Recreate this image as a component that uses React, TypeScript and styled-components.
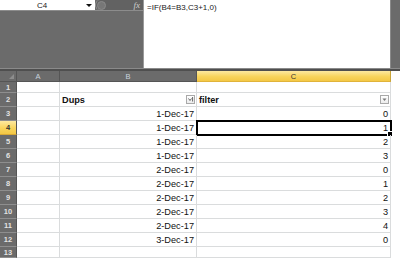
import React from "react";
import styled, { createGlobalStyle } from "styled-components";

const GlobalStyle = createGlobalStyle`
  html, body {
    margin: 0;
    padding: 0;
    background: #ffffff;
  }
  body {
    font-family: "Liberation Sans", Arial, sans-serif;
  }
`;

type Row = {
  n: number;
  b: string;
  c: string;
  h: number;
  head?: boolean;
};

const rows: Row[] = [
  { n: 1, b: "", c: "", h: 11 },
  { n: 2, b: "Dups", c: "filter", h: 14, head: true },
  { n: 3, b: "1-Dec-17", c: "0", h: 14 },
  { n: 4, b: "1-Dec-17", c: "1", h: 14 },
  { n: 5, b: "1-Dec-17", c: "2", h: 14 },
  { n: 6, b: "1-Dec-17", c: "3", h: 14 },
  { n: 7, b: "2-Dec-17", c: "0", h: 14 },
  { n: 8, b: "2-Dec-17", c: "1", h: 14 },
  { n: 9, b: "2-Dec-17", c: "2", h: 14 },
  { n: 10, b: "2-Dec-17", c: "3", h: 14 },
  { n: 11, b: "2-Dec-17", c: "4", h: 14 },
  { n: 12, b: "3-Dec-17", c: "0", h: 14 },
  { n: 13, b: "", c: "", h: 11 },
];

const activeRow = 4;

export default function App() {
  return (
    <Page>
      <GlobalStyle />
      <TopArea>
        <LeftPane>
          <NameRow>
            <NameBox>
              <NameText>C4</NameText>
              <DropArrow />
            </NameBox>
            <FxPill>
              <Knob />
              <Fx>fx</Fx>
            </FxPill>
          </NameRow>
        </LeftPane>
        <FormulaBar>=IF(B4=B3,C3+1,0)</FormulaBar>
        <RightEdge />
      </TopArea>
      <Band />
      <Sheet>
        <Corner>
          <CornerTri />
        </Corner>
        <ColHead>A</ColHead>
        <ColHead>B</ColHead>
        <ColHead $active>C</ColHead>
        <ColRest />
        {rows.map((r) => (
          <React.Fragment key={r.n}>
            <RowHead $h={r.h} $active={r.n === activeRow}>
              {r.n}
            </RowHead>
            <Cell $h={r.h} />
            <Cell $h={r.h} $head={r.head}>
              {r.head ? (
                <>
                  <span>{r.b}</span>
                  <FilterBtn>
                    <svg width="7" height="7" viewBox="0 0 7 7">
                      <path d="M1.5 2.5 L3 4.5 L4.5 2.5" fill="none" stroke="#555" strokeWidth="0.9" />
                      <path d="M5.6 1 V5.5" stroke="#555" strokeWidth="0.9" />
                    </svg>
                  </FilterBtn>
                </>
              ) : (
                r.b
              )}
            </Cell>
            <Cell $h={r.h} $head={r.head} $selected={r.n === activeRow}>
              {r.head ? (
                <>
                  <span>{r.c}</span>
                  <FilterBtn>
                    <svg width="7" height="7" viewBox="0 0 7 7">
                      <path d="M1.5 2.5 L5.5 2.5 L3.5 5 Z" fill="#777" />
                    </svg>
                  </FilterBtn>
                </>
              ) : (
                r.c
              )}
              {r.n === activeRow && <Handle />}
            </Cell>
            <Rest $h={r.h} />
          </React.Fragment>
        ))}
      </Sheet>
    </Page>
  );
}

const Page = styled.div`
  width: 400px;
  height: 275px;
  overflow: hidden;
  background: #ffffff;
  display: flex;
  flex-direction: column;
`;

const TopArea = styled.div`
  display: flex;
  height: 68px;
`;

const LeftPane = styled.div`
  width: 143px;
  background: #6b6b6b;
  display: flex;
  flex-direction: column;
`;

const NameRow = styled.div`
  display: flex;
  height: 11px;
  border-bottom: 1px solid #8c8c8c;
  box-sizing: border-box;
`;

const NameBox = styled.div`
  width: 95px;
  background: #ffffff;
  display: flex;
  align-items: center;
`;

const NameText = styled.span`
  width: 84px;
  text-align: center;
  font-size: 8px;
  color: #222;
`;

const DropArrow = styled.span`
  width: 0;
  height: 0;
  border-left: 3px solid transparent;
  border-right: 3px solid transparent;
  border-top: 3px solid #111;
  margin-left: 2px;
`;

const FxPill = styled.div`
  flex: 1;
  background: #626262;
  border-radius: 6px 0 0 6px;
  display: flex;
  align-items: center;
  justify-content: space-between;
  padding: 0 3px 0 1px;
  border-left: 1px solid #9a9a9a;
`;

const Knob = styled.span`
  width: 7px;
  height: 7px;
  border-radius: 50%;
  background: #777;
  border: 1px solid #8a8a8a;
`;

const Fx = styled.span`
  font-family: "Liberation Serif", serif;
  font-style: italic;
  font-size: 9px;
  color: #cfcfcf;
`;

const FormulaBar = styled.div`
  width: 248px;
  background: #ffffff;
  border-left: 1px solid #9a9a9a;
  border-right: 1px solid #8a8a8a;
  box-sizing: border-box;
  font-size: 8px;
  color: #222;
  padding: 3px 0 0 3px;
`;

const RightEdge = styled.div`
  flex: 1;
  background: #6b6b6b;
`;

const Band = styled.div`
  height: 3px;
  background: #4f4f4f;
  border-top: 1px solid #8a8a8a;
  box-sizing: border-box;
`;

const Sheet = styled.div`
  display: grid;
  grid-template-columns: 17px 43px 137px 194px 9px;
`;

const Corner = styled.div`
  height: 11px;
  background: #6b6b6b;
  border-right: 1px solid #555;
  border-bottom: 1px solid #555;
  box-sizing: border-box;
  display: flex;
  align-items: flex-end;
  justify-content: flex-end;
  padding: 0 2px 2px 0;
`;

const CornerTri = styled.span`
  width: 0;
  height: 0;
  border-left: 5px solid transparent;
  border-bottom: 5px solid #8d8d8d;
`;

const ColHead = styled.div<{ $active?: boolean }>`
  height: 11px;
  box-sizing: border-box;
  border-right: 1px solid ${(p) => (p.$active ? "#c9a53a" : "#555")};
  border-bottom: 1px solid ${(p) => (p.$active ? "#e0b33a" : "#555")};
  background: ${(p) =>
    p.$active ? "linear-gradient(#fde9a0, #f8d45c 55%, #f4c845)" : "#6b6b6b"};
  color: ${(p) => (p.$active ? "#333" : "#c9d3de")};
  font-size: 7.5px;
  display: flex;
  align-items: center;
  justify-content: center;
`;

const ColRest = styled.div`
  height: 11px;
  background: #ffffff;
`;

const RowHead = styled.div<{ $h: number; $active?: boolean }>`
  height: ${(p) => p.$h}px;
  box-sizing: border-box;
  background: ${(p) =>
    p.$active ? "linear-gradient(#fde9a0, #f8d45c 55%, #f4c845)" : "#6b6b6b"};
  color: ${(p) => (p.$active ? "#333" : "#e2e2e2")};
  border-bottom: 1px solid ${(p) => (p.$active ? "#d8a935" : "#8e8e8e")};
  border-right: 1px solid #555;
  font-size: 7.5px;
  font-weight: 700;
  display: flex;
  align-items: center;
  justify-content: center;
`;

const Cell = styled.div<{ $h: number; $head?: boolean; $selected?: boolean }>`
  height: ${(p) => p.$h}px;
  box-sizing: border-box;
  position: relative;
  border-right: 1px solid #dadcdd;
  border-bottom: 1px solid #dadcdd;
  font-size: 9.2px;
  color: #111;
  font-weight: ${(p) => (p.$head ? 700 : 400)};
  display: flex;
  align-items: center;
  justify-content: ${(p) => (p.$head ? "space-between" : "flex-end")};
  padding: ${(p) => (p.$head ? "0 1px 0 2px" : "0 2px 0 0")};
  outline: ${(p) => (p.$selected ? "2px solid #000" : "none")};
  outline-offset: -1px;
`;

const FilterBtn = styled.span`
  width: 9px;
  height: 9px;
  box-sizing: border-box;
  border: 1px solid #a9a9a9;
  background: linear-gradient(#ffffff, #ececec);
  display: flex;
  align-items: center;
  justify-content: center;
  font-weight: 400;
`;

const Handle = styled.span`
  position: absolute;
  right: -3px;
  bottom: -3px;
  width: 4px;
  height: 4px;
  background: #000;
  border: 1px solid #fff;
`;

const Rest = styled.div<{ $h: number }>`
  height: ${(p) => p.$h}px;
  background: #ffffff;
`;
